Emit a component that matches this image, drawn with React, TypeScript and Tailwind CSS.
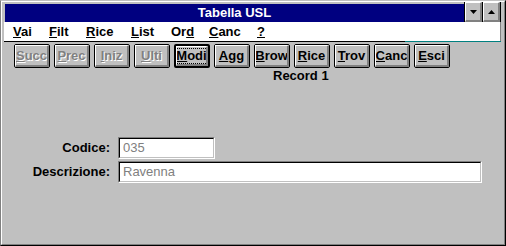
import React from "react";

const font = "font-['Liberation_Sans',Arial,sans-serif]";

function Btn({ label, u = 0, disabled = false, isDefault = false }: { label: string; u?: number; disabled?: boolean; isDefault?: boolean }) {
  const text = (
    <>
      {label.slice(0, u)}
      <span className="underline underline-offset-[1px]">{label[u]}</span>
      {label.slice(u + 1)}
    </>
  );
  return (
    <div className={`w-[36px] h-[24px] rounded-[2px] border-black ${isDefault ? "border-2" : "border"}`}>
      <div className="w-full h-full border-t border-l border-white border-r-2 border-b-2 border-r-[#808080] border-b-[#808080] flex items-center justify-center overflow-hidden">
        {disabled ? (
          <span className="text-[13px] leading-[15px] font-bold text-[#808080] [text-shadow:1px_1px_0_#ffffff] whitespace-nowrap">{text}</span>
        ) : isDefault ? (
          <span className="text-[13px] leading-[14px] font-bold text-black border border-dotted border-black px-[0px] whitespace-nowrap">{text}</span>
        ) : (
          <span className="text-[13px] leading-[15px] font-bold text-black whitespace-nowrap">{text}</span>
        )}
      </div>
    </div>
  );
}

function MenuItem({ label, u = 0, w }: { label: string; u?: number; w: string }) {
  return (
    <span className={`${w} shrink-0 whitespace-nowrap`}>
      {label.slice(0, u)}
      <span className="underline underline-offset-[1px]">{label[u]}</span>
      {label.slice(u + 1)}
    </span>
  );
}

function TitleBtn({ up }: { up?: boolean }) {
  return (
    <div className="w-[18px] h-full border-l border-black bg-[#c0c0c0]">
      <div className="w-full h-full border-t border-l border-white border-r-2 border-b-2 border-r-[#808080] border-b-[#808080] flex items-center justify-center">
        <svg width="7" height="4" viewBox="0 0 7 4">
          {up ? <polygon points="3.5,0 7,4 0,4" fill="#000" /> : <polygon points="0,0 7,0 3.5,4" fill="#000" />}
        </svg>
      </div>
    </div>
  );
}

export default function App() {
  return (
    <div className={`w-[506px] h-[246px] bg-[#c0c0c0] border border-t-[#c0c0c0] border-l-[#808080] border-r-black border-b-black ${font}`}>
      <div className="h-full border border-t-white border-l-white border-r-[#808080] border-b-[#808080] pl-[2px] pr-[3px] flex flex-col">
        {/* title bar */}
        <div className="h-[20px] flex shrink-0">
          <div className="flex-1 ml-[1px] mt-[2px] bg-[#000080] text-white font-bold text-[13px] leading-[18px] text-center">
            Tabella USL
          </div>
          <div className="flex border-r border-black">
            <TitleBtn />
            <TitleBtn up />
          </div>
        </div>
        {/* menu */}
        <div className="h-[19px] bg-white border-r border-[#808080] flex items-center pl-[9px] text-[13px] font-bold text-black leading-[19px] shrink-0">
          <MenuItem label="Vai" w="w-[36px]" />
          <MenuItem label="Filt" w="w-[37px]" />
          <MenuItem label="Rice" w="w-[45px]" />
          <MenuItem label="List" w="w-[40px]" />
          <MenuItem label="Ord" u={2} w="w-[38px]" />
          <MenuItem label="Canc" w="w-[48px]" />
          <MenuItem label="?" w="w-[20px]" />
        </div>
        <div className="h-[1px] flex shrink-0">
          <div className="w-[401px] bg-black" />
          <div className="flex-1 bg-[#008080]" />
        </div>
        {/* buttons */}
        <div className="mt-[2px] pl-[10px] flex gap-[4px] shrink-0">
          <Btn label="Succ" disabled />
          <Btn label="Prec" disabled />
          <Btn label="Iniz" disabled />
          <Btn label="Ulti" disabled />
          <Btn label="Modi" isDefault />
          <Btn label="Agg" />
          <Btn label="Brow" />
          <Btn label="Rice" />
          <Btn label="Trov" />
          <Btn label="Canc" />
          <Btn label="Esci" />
        </div>
        <div className="h-[15px] leading-[15px] pl-[269px] text-[13px] font-bold text-black shrink-0">Record 1</div>
        {/* form */}
        <div className="mt-[54px] flex items-center">
          <div className="w-[106px] text-right text-[13px] font-bold text-black">Codice:</div>
          <div className="ml-[8px] w-[97px] h-[22px] border border-t-[#808080] border-l-[#808080] border-r-white border-b-white">
            <div className="w-full h-full bg-white border border-t-black border-l-black border-r-[#c0c0c0] border-b-[#c0c0c0] pl-[3px] text-[13px] leading-[18px] text-[#808080]">
              035
            </div>
          </div>
        </div>
        <div className="mt-[2px] flex items-center">
          <div className="w-[106px] text-right text-[13px] font-bold text-black">Descrizione:</div>
          <div className="ml-[8px] w-[364px] h-[22px] border border-t-[#808080] border-l-[#808080] border-r-white border-b-white">
            <div className="w-full h-full bg-white border border-t-black border-l-black border-r-[#c0c0c0] border-b-[#c0c0c0] pl-[3px] text-[13px] leading-[18px] text-[#808080]">
              Ravenna
            </div>
          </div>
        </div>
      </div>
    </div>
  );
}
